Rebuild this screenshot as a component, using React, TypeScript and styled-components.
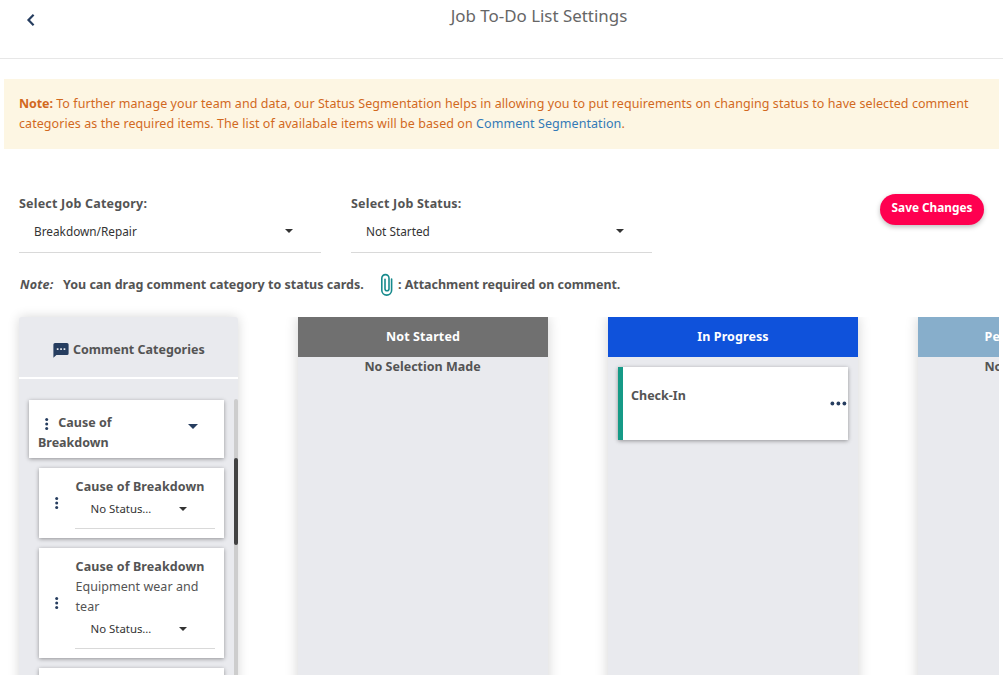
import React from "react";
import styled, { createGlobalStyle } from "styled-components";

const navy = "#263d5f";

const GlobalStyle = createGlobalStyle`
  * { box-sizing: border-box; }
  body {
    margin: 0;
    background: #fff;
    color: #545454;
    font-family: "Noto Sans", "Open Sans", sans-serif;
    font-size: 12.5px;
    line-height: 20px;
    overflow: hidden;
  }
`;

const Page = styled.div`
  height: 675px;
  display: flex;
  flex-direction: column;
  overflow: hidden;
`;

const Header = styled.header`
  flex: none;
  display: grid;
  grid-template-columns: 75px 1fr;
  height: 59px;
  border-bottom: 1px solid #e7e7e7;
`;

const BackButton = styled.button`
  align-self: start;
  justify-self: start;
  display: flex;
  margin: 13px 0 0 26px;
  padding: 0;
  border: 0;
  background: none;
`;

const Title = styled.h1`
  margin: 4px 0 0;
  font-size: 16.9px;
  font-weight: 400;
  line-height: 24px;
  text-align: center;
  color: #666;
`;

const Banner = styled.section`
  flex: none;
  height: 70px;
  margin: 20px 4px 0;
  padding: 15px;
  background: #fdf6e3;
  color: #d2691e;
  letter-spacing: 0.065px;
  white-space: nowrap;
`;

const BannerStrong = styled.b`
  letter-spacing: -0.1px;
`;

const BannerLink = styled.a`
  color: #337ab7;
`;

const Filters = styled.section`
  flex: none;
  display: flex;
  height: 59px;
  margin: 45px 19px 0;
`;

const Field = styled.div<{ $width: number }>`
  display: flex;
  flex-direction: column;
  width: ${(p) => p.$width}px;
  margin-right: 30px;
`;

const FieldLabel = styled.label`
  font-weight: 700;
  letter-spacing: 0.2px;
`;

const Select = styled.div<{ $compact?: boolean }>`
  display: flex;
  align-items: center;
  justify-content: space-between;
  height: ${(p) => (p.$compact ? 32 : 39)}px;
  padding: ${(p) => (p.$compact ? "0 28px 7px 15.5px" : "0 28.5px 4px 15px")};
  border-bottom: 1px solid #d9d9d9;
  color: #333;
  font-size: ${(p) => (p.$compact ? 11.4 : 11.8)}px;
`;

const SaveButton = styled.button`
  width: 104px;
  height: 31px;
  margin: 0 0 0 auto;
  padding: 0 0 5px;
  border: 0;
  border-radius: 16px;
  background: #ff0050;
  box-shadow: 0 2px 5px rgba(0, 0, 0, 0.26);
  color: #fff;
  font: 700 11.8px "Noto Sans", sans-serif;
`;

const Hint = styled.section`
  flex: none;
  display: flex;
  align-items: center;
  height: 24px;
  margin: 20px 19px 0;
  font-weight: 700;
  white-space: nowrap;
`;

const HintLabel = styled.em`
  width: 44px;
  padding-left: 1px;
  letter-spacing: 0.2px;
`;

const HintText = styled.span`
  width: 317px;
`;

const HintLegend = styled.span`
  margin-left: 5px;
  letter-spacing: -0.04px;
`;

const Board = styled.main`
  flex: 1;
  display: flex;
  min-height: 0;
  margin: 20px 4px 0 19px;
`;

const Sidebar = styled.aside`
  flex: none;
  display: flex;
  flex-direction: column;
  width: 219px;
  height: 420px;
  border-radius: 3px;
  background: #e9eaee;
  box-shadow: 0 0 12px rgba(0, 0, 0, 0.16);
`;

const SidebarTitle = styled.h2`
  flex: none;
  display: flex;
  align-items: center;
  gap: 4px;
  height: 62px;
  margin: 0;
  padding: 5px 0 0 34px;
  border-bottom: 2px solid #fff;
  font-size: 12.5px;
`;

const Scroller = styled.div`
  flex: 1;
  display: flex;
  min-height: 0;
  margin-top: 20px;
`;

const CardList = styled.div`
  flex: 1;
  display: flex;
  flex-direction: column;
  gap: 10px;
  padding: 1px 10px 0;
`;

const cardShadow = "0 1px 4px rgba(0, 0, 0, 0.38)";

const GroupCard = styled.div`
  flex: none;
  display: flex;
  height: 58px;
  padding: 13px 26px 0 9px;
  background: #fff;
  box-shadow: ${cardShadow};
  font-weight: 700;
`;

const GroupName = styled.div`
  width: 120px;
  margin-right: auto;
`;

const GroupCaret = styled.div`
  padding-top: 2px;
`;

const InlineDots = styled.span`
  display: inline-block;
  height: 14px;
  margin: 0 6px 0 7px;
  vertical-align: -4px;

  svg { display: block; }
`;

const ItemCard = styled.div<{ $height: number }>`
  flex: none;
  display: grid;
  grid-template-columns: 36px 140px;
  height: ${(p) => p.$height}px;
  margin-left: 10px;
  background: #fff;
  box-shadow: ${cardShadow};
`;

const DragHandle = styled.div`
  align-self: center;
  justify-self: center;
  display: flex;
  padding-right: 1px;
`;

const ItemBody = styled.div`
  padding-top: 9px;
  white-space: nowrap;
`;

const ItemTitle = styled.div`
  padding-left: 0.5px;
  font-weight: 700;
  letter-spacing: 0.1px;
`;

const ItemText = styled.div`
  padding-left: 0.5px;
  letter-spacing: 0.04px;
`;

const Track = styled.div`
  width: 4px;
  border-radius: 2px 2px 0 0;
  background: #cdcdcd;
`;

const Thumb = styled.div`
  height: 87px;
  margin-top: 59px;
  border-radius: 2px;
  background: #424242;
`;

const Columns = styled.div`
  flex: 1;
  display: flex;
  gap: 60px;
  min-width: 0;
  margin-left: 40px;
  padding-left: 20px;
  overflow: hidden;
`;

const Column = styled.section`
  flex: none;
  width: 250px;
  height: 420px;
  background: #e9eaee;
  box-shadow: 0 0 12px rgba(0, 0, 0, 0.18);
`;

const ColumnTitle = styled.h2<{ $color: string }>`
  height: 40px;
  margin: 0;
  background: ${(p) => p.$color};
  color: #fff;
  font-size: 12.5px;
  letter-spacing: 0.1px;
  line-height: 39px;
  text-align: center;
`;

const Empty = styled.p`
  margin: 0;
  padding-right: 1px;
  font-weight: 700;
  text-align: center;
`;

const StatusCard = styled.div`
  display: flex;
  justify-content: space-between;
  height: 73px;
  margin: 10px 10px 0;
  padding: 19px 1px 0 8px;
  border-left: 5px solid #159a87;
  background: #fff;
  box-shadow: ${cardShadow};
  font-weight: 700;
`;

const MoreButton = styled.button`
  align-self: start;
  display: flex;
  margin-top: 15px;
  padding: 0;
  border: 0;
  background: none;
`;

const Caret = ({ width = 8, color = "#333" }: { width?: number; color?: string }) => (
  <svg width={width} height={width / 2} viewBox="0 0 8 4" fill={color}>
    <path d="M0 0h8L4 4z" />
  </svg>
);

const VerticalDots = () => (
  <svg width="4" height="14" viewBox="0 0 4 14" fill={navy}>
    <circle cx="1.7" cy="2.4" r="1.5" />
    <circle cx="1.7" cy="7" r="1.5" />
    <circle cx="1.7" cy="11.6" r="1.5" />
  </svg>
);

const Item = ({ title, text, height }: { title: string; text?: string[]; height: number }) => (
  <ItemCard $height={height}>
    <DragHandle>
      <VerticalDots />
    </DragHandle>
    <ItemBody>
      <ItemTitle>{title}</ItemTitle>
      {text?.map((line) => <ItemText key={line}>{line}</ItemText>)}
      <Select $compact>
        No Status…
        <Caret />
      </Select>
    </ItemBody>
  </ItemCard>
);

export default function App() {
  return (
    <Page>
      <GlobalStyle />
      <Header>
        <BackButton aria-label="Back">
          <svg width="10" height="14" viewBox="0 0 10 14" fill="none" stroke={navy} strokeWidth="2.2">
            <path d="M7.6 1.8L2.5 7l5.1 5.2" />
          </svg>
        </BackButton>
        <Title>Job To-Do List Settings</Title>
      </Header>
      <Banner>
        <BannerStrong>Note:</BannerStrong> To further manage your team and data, our Status Segmentation helps in
        allowing you to put requirements on changing status to have selected comment
        <br />
        categories as the required items. The list of availabale items will be based on{" "}
        <BannerLink>Comment Segmentation</BannerLink>.
      </Banner>
      <Filters>
        <Field $width={302}>
          <FieldLabel>Select Job Category:</FieldLabel>
          <Select>
            Breakdown/Repair
            <Caret />
          </Select>
        </Field>
        <Field $width={301}>
          <FieldLabel>Select Job Status:</FieldLabel>
          <Select>
            Not Started
            <Caret />
          </Select>
        </Field>
        <SaveButton>Save Changes</SaveButton>
      </Filters>
      <Hint>
        <HintLabel>Note:</HintLabel>
        <HintText>You can drag comment category to status cards.</HintText>
        <svg width="13" height="24" viewBox="0 0 13 24" fill="none" stroke="#178a8c" strokeWidth="1.6" strokeLinecap="round">
          <path d="M11.6 6v11.2a4.9 4.9 0 0 1-9.8 0V5.2a3.6 3.6 0 0 1 7.2 0v10.6a2 2 0 0 1-4 0V6.2" />
        </svg>
        <HintLegend>: Attachment required on comment.</HintLegend>
      </Hint>
      <Board>
        <Sidebar>
          <SidebarTitle>
            <svg width="16" height="16" viewBox="0 0 16 16">
              <path d="M2 1h12a1.6 1.6 0 0 1 1.6 1.6v8.8A1.6 1.6 0 0 1 14 13H3.4L.4 15.8V2.6A1.6 1.6 0 0 1 2 1z" fill={navy} />
              <path d="M3.8 6.2h1.7v1.7H3.8zM7.2 6.2h1.7v1.7H7.2zM10.6 6.2h1.7v1.7h-1.7z" fill="#e9eaee" />
            </svg>
            Comment Categories
          </SidebarTitle>
          <Scroller>
            <CardList>
              <GroupCard>
                <GroupName>
                  <InlineDots>
                    <VerticalDots />
                  </InlineDots>{" "}
                  Cause of Breakdown
                </GroupName>
                <GroupCaret>
                  <Caret width={10} color={navy} />
                </GroupCaret>
              </GroupCard>
              <Item title="Cause of Breakdown" height={70} />
              <Item title="Cause of Breakdown" text={["Equipment wear and", "tear"]} height={110} />
              <Item title="Cause of Breakdown" height={70} />
            </CardList>
            <Track>
              <Thumb />
            </Track>
          </Scroller>
        </Sidebar>
        <Columns>
          <Column>
            <ColumnTitle $color="#707070">Not Started</ColumnTitle>
            <Empty>No Selection Made</Empty>
          </Column>
          <Column>
            <ColumnTitle $color="#0f52db">In Progress</ColumnTitle>
            <StatusCard>
              Check-In
              <MoreButton aria-label="More">
                <svg width="17" height="5" viewBox="0 0 17 5" fill={navy}>
                  <circle cx="2.4" cy="2.5" r="1.9" />
                  <circle cx="8.4" cy="2.5" r="1.9" />
                  <circle cx="14.4" cy="2.5" r="1.9" />
                </svg>
              </MoreButton>
            </StatusCard>
          </Column>
          <Column>
            <ColumnTitle $color="#87aecb">Pending Customer</ColumnTitle>
            <Empty>No Selection Made</Empty>
          </Column>
        </Columns>
      </Board>
    </Page>
  );
}
